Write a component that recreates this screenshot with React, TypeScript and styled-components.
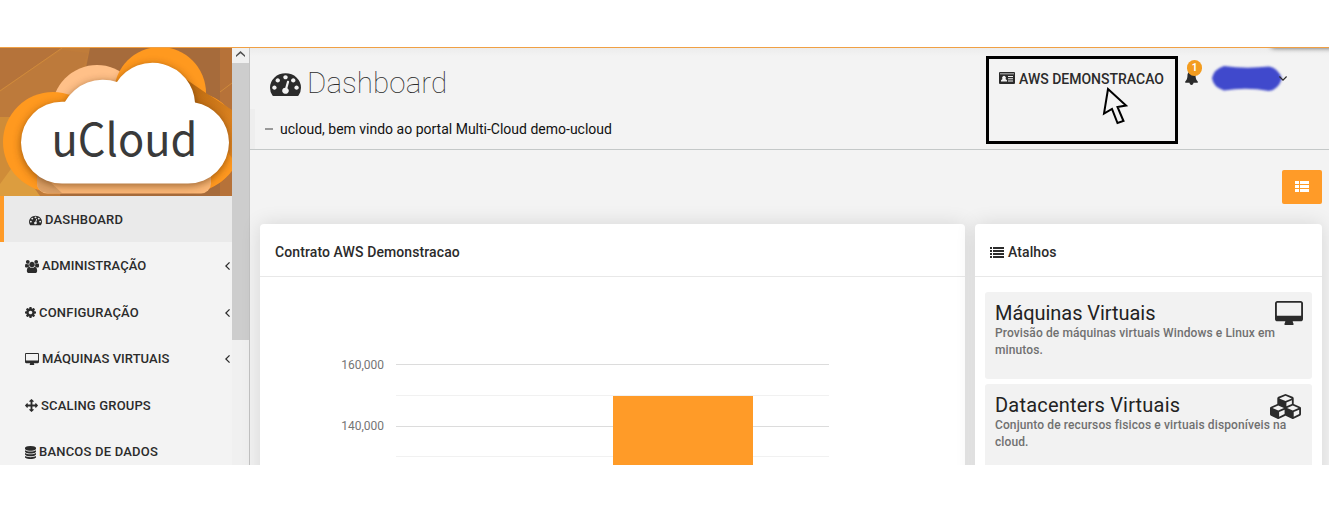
import React from "react";
import styled, { createGlobalStyle } from "styled-components";

const Global = createGlobalStyle`
  * { box-sizing: border-box; }
  body { margin: 0; background: #fff; }
`;

const ORANGE = "#ff9b28";
const INK = "#2b2b2b";

const ICONS = {
  gauge: { box: "0 0 1792 1792", d: "M384 1152q0-53-37.5-90.5t-90.5-37.5-90.5 37.5-37.5 90.5 37.5 90.5 90.5 37.5 90.5-37.5 37.5-90.5zm192-448q0-53-37.5-90.5t-90.5-37.5-90.5 37.5-37.5 90.5 37.5 90.5 90.5 37.5 90.5-37.5 37.5-90.5zm428 481l101-382q6-26-7.5-48.5t-38.5-29.5-48 6.5-30 39.5l-101 382q-60 5-107 43.5t-63 98.5q-20 77 20 146t117 89 146-20 89-117q16-60-6-117t-72-91zm660-33q0-53-37.5-90.5t-90.5-37.5-90.5 37.5-37.5 90.5 37.5 90.5 90.5 37.5 90.5-37.5 37.5-90.5zm-640-640q0-53-37.5-90.5t-90.5-37.5-90.5 37.5-37.5 90.5 37.5 90.5 90.5 37.5 90.5-37.5 37.5-90.5zm448 192q0-53-37.5-90.5t-90.5-37.5-90.5 37.5-37.5 90.5 37.5 90.5 90.5 37.5 90.5-37.5 37.5-90.5zm320 448q0 261-141 483-19 29-54 29h-1402q-35 0-54-29-141-221-141-483 0-182 71-348t191-286 286-191 348-71 348 71 286 191 191 286 71 348z" },
  users: { box: "64 0 1920 1792", d: "M657 896q-162 5-265 128h-134q-82 0-138-40.5t-56-118.5q0-353 124-353 6 0 43.5 21t97.5 42.5 119 21.5q67 0 133-23-5 37-5 66 0 159 93 293zm1071 637q0 120-73 189.5t-194 69.5h-874q-121 0-194-69.5t-73-189.5q0-53 3.5-103.5t14-109 26.5-108.5 43-97.5 62-81 85.5-53.5 111.5-20q10 0 43 21.5t73 48 107 48 135 21.5 135-21.5 107-48 73-48 43-21.5q61 0 111.5 20t85.5 53.5 62 81 43 97.5 26.5 108.5 14 109 3.5 103.5zm-1024-1277q0 106-75 181t-181 75-181-75-75-181 75-181 181-75 181 75 75 181zm704 384q0 159-112.5 271.5t-271.5 112.5-271.5-112.5-112.5-271.5 112.5-271.5 271.5-112.5 271.5 112.5 112.5 271.5zm576 225q0 78-56 118.5t-138 40.5h-134q-103-123-265-128 93-134 93-293 0-29-5-66 66 23 133 23 59 0 119-21.5t97.5-42.5 43.5-21q124 0 124 353zm-128-609q0 106-75 181t-181 75-181-75-75-181 75-181 181-75 181 75 75 181z" },
  cog: { box: "128 128 1536 1536", d: "M1152 896q0-106-75-181t-181-75-181 75-75 181 75 181 181 75 181-75 75-181zm512-109v222q0 12-8 23t-20 13l-185 28q-19 54-39 91 35 50 107 138 10 12 10 25t-9 23q-27 37-99 108t-94 71q-12 0-26-9l-138-108q-44 23-91 38-16 136-29 186-7 28-36 28h-222q-14 0-24.5-8.5t-11.5-21.5l-28-184q-49-16-90-37l-141 107q-10 9-25 9-14 0-25-11-126-114-165-168-7-10-7-23 0-12 8-23 15-21 51-66.5t54-70.5q-27-50-41-99l-183-27q-13-2-21-12.5t-8-23.5v-222q0-12 8-23t19-13l186-28q14-46 39-92-40-57-107-138-10-12-10-24 0-10 9-23 26-36 98.5-107.5t94.5-71.5q13 0 26 10l138 107q44-23 91-38 16-136 29-186 7-28 36-28h222q14 0 24.5 8.5t11.5 21.5l28 184q49 16 90 37l142-107q9-9 24-9 13 0 25 10 129 119 165 170 7 8 7 22 0 12-8 23-15 21-51 66.5t-54 70.5q26 50 41 98l183 28q13 2 21 12.5t8 23.5z" },
  desktop: { box: "-64 0 1920 1664", d: "M1728 992v-832q0-13-9.5-22.5t-22.5-9.5h-1600q-13 0-22.5 9.5t-9.5 22.5v832q0 13 9.5 22.5t22.5 9.5h1600q13 0 22.5-9.5t9.5-22.5zm128-832v1088q0 66-47 113t-113 47h-544q0 37 16 77.5t32 71 16 43.5q0 26-19 45t-45 19h-512q-26 0-45-19t-19-45q0-14 16-44t32-70 16-78h-544q-66 0-113-47t-47-113v-1088q0-66 47-113t113-47h1600q66 0 113 47t47 113z" },
  arrows: { box: "0 0 1792 1792", d: "M1792 896q0 26-19 45l-256 256q-19 19-45 19t-45-19-19-45v-128h-384v384h128q26 0 45 19t19 45-19 45l-256 256q-19 19-45 19t-45-19l-256-256q-19-19-19-45t19-45 45-19h128v-384h-384v128q0 26-19 45t-45 19-45-19l-256-256q-19-19-19-45t19-45l256-256q19-19 45-19t45 19 19 45v128h384v-384h-128q-26 0-45-19t-19-45 19-45l256-256q19-19 45-19t45 19l256 256q19 19 19 45t-19 45-45 19h-128v384h384v-128q0-26 19-45t45-19 45 19l256 256q19 19 19 45z" },
  database: { box: "128 0 1536 1792", d: "M896 768q237 0 443-43t325-127v170q0 69-103 128t-280 93.5-385 34.5-385-34.5-280-93.5-103-128v-170q119 84 325 127t443 43zm0 768q237 0 443-43t325-127v170q0 69-103 128t-280 93.5-385 34.5-385-34.5-280-93.5-103-128v-170q119 84 325 127t443 43zm0-384q237 0 443-43t325-127v170q0 69-103 128t-280 93.5-385 34.5-385-34.5-280-93.5-103-128v-170q119 84 325 127t443 43zm0-1152q208 0 385 34.5t280 93.5 103 128v128q0 69-103 128t-280 93.5-385 34.5-385-34.5-280-93.5-103-128v-128q0-69 103-128t280-93.5 385-34.5z" },
  cubes: { box: "0 0 2176 1792", d: "M640 1632l384-192v-314l-384 164v342zm-64-454l404-173-404-173-404 173zm1088 454l384-192v-314l-384 164v342zm-64-454l404-173-404-173-404 173zm-448-293l384-165v-266l-384 164v267zm-64-379l441-189-441-189-441 189zm1088 518v416q0 36-19 67t-52 47l-448 224q-25 14-57 14t-57-14l-448-224q-4-2-7-4-2 2-7 4l-448 224q-25 14-57 14t-57-14l-448-224q-33-16-52-47t-19-67v-416q0-38 21.5-70t56.5-48l434-186v-400q0-38 21.5-70t56.5-48l448-192q23-10 50-10t50 10l448 192q35 16 56.5 48t21.5 70v400l434 186q36 16 57 48t21 70z" },
  bell: { box: "64 0 1664 1792", d: "M1728 1408q0 52-38 90t-90 38h-448q0 106-75 181t-181 75-181-75-75-181h-448q-52 0-90-38t-38-90q50-42 91-88t85-119.5 74.5-158.5 50-206 19.5-260q0-152 117-282.5t307-158.5q-8-19-8-39 0-40 28-68t68-28 68 28 28 68q0 20-8 39 190 28 307 158.5t117 282.5q0 139 19.5 260t50 206 74.5 158.5 85 119.5 91 88z" },
  idcard: { box: "0 0 16 12", d: "M1 0h14a1 1 0 0 1 1 1v10a1 1 0 0 1-1 1H1a1 1 0 0 1-1-1V1a1 1 0 0 1 1-1zM1 1.600v.7h14v-.7zM2 9.500h6V8.200L6.500 7a1.900 1.900 0 1 0-3 0L2 8.200zM9 4v1h5V4zM9 6.200v1h5v-1zM9 8.500v1h5v-1z" },
  list: { box: "0 0 14 11", d: "M0 0h2v2H0zM3 0h11v2H3zM0 3h2v2H0zM3 3h11v2H3zM0 6h2v2H0zM3 6h11v2H3zM0 9h2v2H0zM3 9h11v2H3z" },
  thList: { box: "0 0 14 11", d: "M0 0h4v3H0zM5 0h9v3H5zM0 4h4v3H0zM5 4h9v3H5zM0 8h4v3H0zM5 8h9v3H5z" },
  left: { box: "0 0 5 8", d: "M4.100 0L5 .8 1.800 4 5 7.200 4.100 8 0 4z" },
  down: { box: "0 0 8 5", d: "M0 .9L.8 0 4 3.200 7.200 0 8 .9 4 5z" },
  up: { box: "0 0 9 6", d: "M0 4.200L4.500 0 9 4.200V6L4.500 2.200 0 6z" },
} as const;

type IconName = keyof typeof ICONS;

const Glyph = styled.svg<{ $w: number; $h: number; $rule: string }>`
  width: ${(p) => p.$w}px;
  height: ${(p) => p.$h}px;
  flex: none;
  display: block;
  fill: currentColor;
  fill-rule: ${(p) => p.$rule};
`;

const Icon = ({ name, w, h }: { name: IconName; w: number; h: number }) => (
  <Glyph $w={w} $h={h} $rule={name === "idcard" ? "evenodd" : "nonzero"} viewBox={ICONS[name].box} preserveAspectRatio="none">
    <path d={ICONS[name].d} />
  </Glyph>
);

const Page = styled.div`
  width: 1329px;
  height: 512px;
  padding-top: 47px;
  background: #fff;
  overflow: hidden;
  color: ${INK};
  font-family: Roboto, "Liberation Sans", sans-serif;
`;

const Portal = styled.div`
  position: relative;
  display: flex;
  height: 418px;
  border-top: 1px solid #f0a044;
  background: #f3f3f3;
  overflow: hidden;
`;

const Sidebar = styled.nav`
  width: 232px;
  flex: none;
`;

const Logo = styled.svg`
  display: block;
  width: 232px;
  height: 148px;
`;

const MenuItem = styled.a<{ $active?: boolean }>`
  display: flex;
  align-items: center;
  gap: 3px;
  height: ${(p) => (p.$active ? 46 : 46.5)}px;
  padding: 2px 2px 0 25px;
  border-left: ${(p) => (p.$active ? `4px solid ${ORANGE}` : "0")};
  background: ${(p) => (p.$active ? "#eaeaea" : "transparent")};
`;

const MenuText = styled.span<{ $ls: number }>`
  flex: 1;
  font-size: 13px;
  font-weight: 500;
  line-height: 18px;
  letter-spacing: ${(p) => p.$ls}px;
  white-space: nowrap;
`;

const ScrollTrack = styled.div`
  width: 18px;
  flex: none;
  background: #f0f0f0;
  border-right: 1px solid #c3c3c3;
`;

const ScrollButton = styled.div`
  display: flex;
  justify-content: center;
  height: 15px;
  padding-top: 3px;
  color: #505050;
`;

const ScrollThumb = styled.div`
  height: 277px;
  background: #cdcdcd;
`;

const Content = styled.div`
  flex: 1;
  min-width: 0;
`;

const Header = styled.header`
  display: flex;
  justify-content: space-between;
  height: 102px;
  border-bottom: 1px solid #c4c8c8;
  background: linear-gradient(#ececec, #f3f3f3 8px);
`;

const Heading = styled.div`
  display: flex;
  flex-direction: column;
  justify-content: space-between;
`;

const TitleRow = styled.div`
  display: flex;
  align-items: center;
  gap: 6px;
  padding: 17px 0 0 20px;
`;

const Title = styled.h1`
  margin: 0;
  font-size: 29.5px;
  font-weight: 100;
  line-height: 36px;
  letter-spacing: 0.1px;
`;

const Welcome = styled.div`
  display: flex;
  align-items: center;
  gap: 7px;
  height: 40px;
  padding-left: 10px;
  border-left: 5px solid #eeeeee;
  font-size: 14px;
  color: #111;
`;

const Dash = styled.span`
  width: 8px;
  height: 2px;
  background: #999;
`;

const Tools = styled.div`
  display: flex;
  align-items: flex-start;
  padding: 8px 42px 0 0;
`;

const Contract = styled.div`
  display: flex;
  align-items: flex-start;
  gap: 4px;
  width: 192px;
  height: 88px;
  padding: 13px 0 0 10px;
  border: 3px solid #000;
  font-size: 14px;
  font-weight: 500;
  line-height: 15px;
  white-space: nowrap;
`;

const Bell = styled.div`
  position: relative;
  margin: 14px 0 0 7px;
`;

const Badge = styled.span`
  position: absolute;
  left: 2px;
  top: -10px;
  width: 15px;
  height: 16px;
  border-radius: 8px;
  background: #f39c1f;
  color: #fff;
  font-size: 10px;
  font-weight: 700;
  line-height: 16px;
  text-align: center;
`;

const Scribble = styled.svg`
  display: block;
  width: 78px;
  height: 34px;
  margin: 5px -6px 0 9px;
`;

const ChevronSlot = styled.div`
  position: relative;
  margin-top: 20px;
`;

const Pointer = styled.svg`
  position: absolute;
  left: 1102px;
  top: 39px;
  width: 26px;
  height: 38px;
`;

const CornerShade = styled.div`
  position: absolute;
  right: -8px;
  top: -6px;
  width: 66px;
  height: 6px;
  border-radius: 6px;
  box-shadow: 0 0 5px rgba(0, 0, 0, 0.6);
`;

const Actions = styled.div`
  display: flex;
  justify-content: flex-end;
  padding: 20px 7px 20px 0;
`;

const ListButton = styled.button`
  display: flex;
  align-items: center;
  justify-content: center;
  width: 40px;
  height: 34px;
  padding: 0 1px 1px 0;
  border: 0;
  border-radius: 2px;
  background: ${ORANGE};
  color: #fff;
`;

const Cards = styled.div`
  display: grid;
  grid-template-columns: 705px 347px;
  gap: 10px;
  padding-left: 10px;
`;

const Card = styled.section`
  height: 300px;
  border-radius: 4px;
  background: #fff;
  box-shadow: 0 0 20px rgba(0, 0, 0, 0.12);
`;

const CardTitle = styled.h2`
  display: flex;
  align-items: center;
  gap: 4px;
  height: 53px;
  margin: 0;
  padding: 4px 15px 0;
  border-bottom: 1px solid #e8e8e8;
  font-size: 14px;
  font-weight: 500;
  letter-spacing: 0.1px;
`;

const Chart = styled.svg`
  display: block;
  width: 705px;
  height: 188px;
  font: 12px Roboto, sans-serif;
`;

const Shortcuts = styled.div`
  display: flex;
  flex-direction: column;
  gap: 5px;
  padding: 15px 10px;
`;

const Shortcut = styled.article`
  position: relative;
  height: 87px;
  padding: 10px;
  border-radius: 3px;
  background: #f2f2f2;
`;

const ShortcutTitle = styled.h3<{ $ls: number }>`
  margin: 0;
  font-size: 20px;
  font-weight: 400;
  line-height: 23px;
  letter-spacing: ${(p) => p.$ls}px;
  color: #222;
`;

const ShortcutText = styled.p`
  margin: 0;
  font-size: 12px;
  font-weight: 500;
  line-height: 17px;
  letter-spacing: 0.11px;
  white-space: pre;
  color: #707070;
`;

const ShortcutIcon = styled.div<{ $right: number; $top: number }>`
  position: absolute;
  right: ${(p) => p.$right}px;
  top: ${(p) => p.$top}px;
`;

const CloudLogo = () => (
  <Logo viewBox="0 0 232 148">
    <defs>
      <filter id="soft" x="-20%" y="-20%" width="140%" height="140%">
        <feGaussianBlur stdDeviation="4" />
      </filter>
      <linearGradient id="fold" x1="0" y1="0" x2="1" y2="1">
        <stop offset="0" stopColor="#b8680f" />
        <stop offset="1" stopColor="#e58a26" />
      </linearGradient>
    </defs>
    <rect width="232" height="148" fill="#c07c3a" />
    <path d="M90 0h142v148H60z" fill="#a66b3b" />
    <path d="M62 0H0v42z" fill="#b5733a" />
    <path d="M0 69V43L62 2L88 5L64 69z" fill="#bd7a3b" />
    <path d="M0 69h22v79H0z" fill="#cf8c38" />
    <path d="M0 148V136l16-22 24 34z" fill="#dc9d3f" />
    <path d="M220 0h12v148h-12z" fill="#b67239" />
    <path d="M0 43L62 0M220 44l12-9" stroke="#cf8a3c" fill="none" />
    <circle cx="97" cy="62" r="45" fill="#ffc088" />
    <circle cx="160" cy="45" r="46" fill="#ff991f" />
    <circle cx="53" cy="94" r="50" fill="#ff991f" />
    <circle cx="191" cy="94" r="50" fill="#ff991f" />
    <path d="M187 32L206 45L232 62V110L195 60z" fill="url(#fold)" />
    <rect x="37" y="110" width="174" height="35.500" rx="10" fill="#fbb877" />
    <path d="M37 122l25 23H47q-10-1-10-10z" fill="#dba066" />
    <path d="M62 137.500A41 41 0 0 1 21 96.500A41 41 0 0 1 62 55.700L65 55.700A44 44 0 0 1 117 36A42.500 42.500 0 0 1 195 56.500A41 41 0 0 1 229 96.500A41 41 0 0 1 188 137.500Z" fill="#5a2c00" opacity=".6" filter="url(#soft)" />
    <path d="M62 135.500A41 41 0 0 1 21 94.500A41 41 0 0 1 62 53.700L65 53.700A44 44 0 0 1 117 34A42.500 42.500 0 0 1 195 54.500A41 41 0 0 1 229 94.500A41 41 0 0 1 188 135.500Z" fill="#fff" />
    <text x="51.500" y="107.500" fontSize="45" textLength="146" lengthAdjust="spacingAndGlyphs" fill="#3a3a3a" fontFamily='"Noto Sans CJK SC", "Noto Sans", sans-serif'>uCloud</text>
  </Logo>
);

const MENU: { icon: IconName; w: number; h: number; label: string; ls: number; more?: boolean; active?: boolean }[] = [
  { icon: "gauge", w: 13, h: 12, label: "DASHBOARD", ls: 0.2, active: true },
  { icon: "users", w: 14, h: 13, label: "ADMINISTRAÇÃO", ls: 0.06, more: true },
  { icon: "cog", w: 11, h: 11, label: "CONFIGURAÇÃO", ls: 0.2, more: true },
  { icon: "desktop", w: 14, h: 12, label: "MÁQUINAS VIRTUAIS", ls: 0.05, more: true },
  { icon: "arrows", w: 13, h: 13, label: "SCALING GROUPS", ls: 0.16 },
  { icon: "database", w: 11, h: 13, label: "BANCOS DE DADOS", ls: 0.2 },
];

const AXIS = [
  { y: 87, text: 92, minor: 118, label: "160,000" },
  { y: 149, text: 153, minor: 179, label: "140,000" },
];

export default function App() {
  return (
    <Page>
      <Global />
      <Portal>
        <Sidebar>
          <CloudLogo />
          {MENU.map((m) => (
            <MenuItem key={m.label} $active={m.active}>
              <Icon name={m.icon} w={m.w} h={m.h} />
              <MenuText $ls={m.ls}>{m.label}</MenuText>
              {m.more && <Icon name="left" w={5} h={8} />}
            </MenuItem>
          ))}
        </Sidebar>
        <ScrollTrack>
          <ScrollButton><Icon name="up" w={9} h={6} /></ScrollButton>
          <ScrollThumb />
        </ScrollTrack>
        <Content>
          <Header>
            <Heading>
              <TitleRow>
                <Icon name="gauge" w={31} h={29} />
                <Title>Dashboard</Title>
              </TitleRow>
              <Welcome><Dash /><span>ucloud, bem vindo ao portal Multi-Cloud demo-ucloud</span></Welcome>
            </Heading>
            <Tools>
              <Contract>
                <Icon name="idcard" w={16} h={12} />
                <span>AWS DEMONSTRACAO</span>
              </Contract>
              <Bell>
                <Icon name="bell" w={13} h={15} />
                <Badge>1</Badge>
              </Bell>
              <Scribble viewBox="0 0 78 34">
                <defs>
                  <filter id="spray" filterUnits="userSpaceOnUse" x="0" y="0" width="78" height="34">
                    <feGaussianBlur stdDeviation="1.3" />
                  </filter>
                </defs>
                <path d="M17 5Q38 8 62 5.500Q71 7 75 17.500Q71 29 62 30Q40 26 17 29.500Q6 26 5 17Q7 8 17 5z" fill="#3f48cc" filter="url(#spray)" />
              </Scribble>
              <ChevronSlot><Icon name="down" w={8} h={5} /></ChevronSlot>
            </Tools>
          </Header>
          <Actions>
            <ListButton><Icon name="thList" w={14} h={11} /></ListButton>
          </Actions>
          <Cards>
            <Card>
              <CardTitle>Contrato AWS Demonstracao</CardTitle>
              <Chart viewBox="0 0 705 188">
                {AXIS.map((a) => (
                  <g key={a.label}>
                    <text x="124" y={a.text} textAnchor="end" fill="#757575">{a.label}</text>
                    <path d={`M136 ${a.y + 0.5}H569`} stroke="#dcdcdc" />
                    <path d={`M136 ${a.minor + 0.5}H569`} stroke="#f1f1f1" />
                  </g>
                ))}
                <rect x="353" y="119" width="140" height="69" fill={ORANGE} />
              </Chart>
            </Card>
            <Card>
              <CardTitle><Icon name="list" w={14} h={11} />Atalhos</CardTitle>
              <Shortcuts>
                <Shortcut>
                  <ShortcutTitle $ls={-0.05}>Máquinas Virtuais</ShortcutTitle>
                  <ShortcutText>{"Provisão de máquinas virtuais Windows e Linux em\nminutos."}</ShortcutText>
                  <ShortcutIcon $right={9} $top={9}><Icon name="desktop" w={28} h={24} /></ShortcutIcon>
                </Shortcut>
                <Shortcut>
                  <ShortcutTitle $ls={0.2}>Datacenters Virtuais</ShortcutTitle>
                  <ShortcutText>{"Conjunto de recursos fisicos e virtuais disponíveis na\ncloud."}</ShortcutText>
                  <ShortcutIcon $right={11} $top={10}><Icon name="cubes" w={31} h={25} /></ShortcutIcon>
                </Shortcut>
              </Shortcuts>
            </Card>
          </Cards>
        </Content>
        <CornerShade />
        <Pointer viewBox="0 0 26 38">
          <path d="M6 2L24 18.500L15.500 20L21.500 34L15.500 36L10 22L2 26.500Z" fill="#f3f3f3" stroke="#000" strokeWidth="2" />
        </Pointer>
      </Portal>
    </Page>
  );
}
